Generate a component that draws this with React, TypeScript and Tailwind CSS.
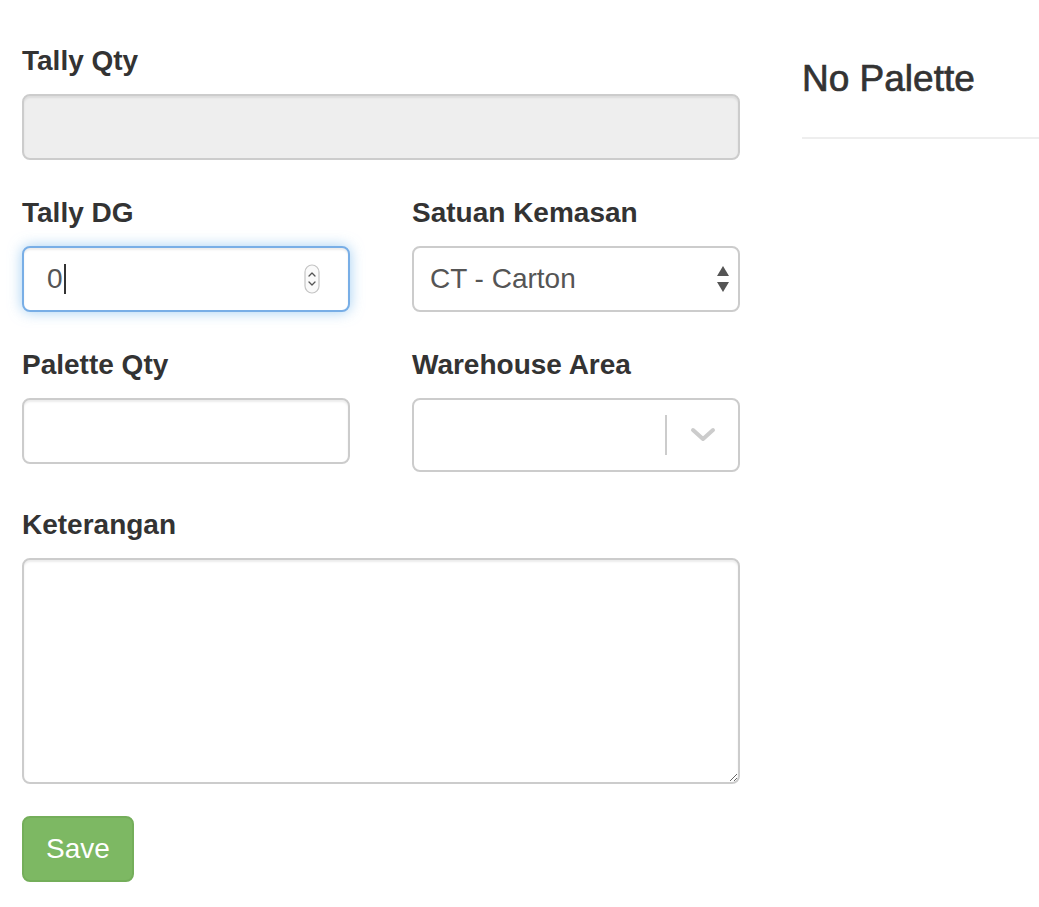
import React from "react";

const labelCls = "block text-[28px] leading-[37px] font-bold mb-[15px] text-[#333]";
const inputShape =
  "w-full h-[66px] rounded-[8px] border-2 border-[#cccccc] shadow-[inset_0_2px_2px_rgba(0,0,0,0.075)]";

export default function App() {
  return (
    <div className="flex min-h-[907px] w-[1039px] overflow-hidden bg-white pl-[22px] pt-[42px] font-['Liberation_Sans',Arial,sans-serif] text-[#333]">
      <div className="w-[718px] shrink-0">
        <div className="mb-[34px]">
          <label className={labelCls}>Tally Qty</label>
          <div className={`${inputShape} bg-[#eeeeee]`} />
        </div>

        <div className="grid grid-cols-2 gap-x-[62px]">
          <div className="mb-[34px]">
            <label className={labelCls}>Tally DG</label>
            <div className="relative flex h-[66px] w-full items-center rounded-[8px] border-2 border-[#78aee6] bg-white pl-[23px] shadow-[inset_0_2px_2px_rgba(0,0,0,0.075),0_0_14px_rgba(102,175,233,0.6)]">
              <span className="text-[28px] text-[#555]">0</span>
              <span className="ml-[1px] inline-block h-[30px] w-[2px] bg-[#333]" />
              <svg
                className="absolute right-[28px] top-1/2 -translate-y-1/2"
                width="16"
                height="30"
                viewBox="0 0 16 30"
              >
                <rect x="1" y="1" width="14" height="28" rx="7" fill="#fafafa" stroke="#c4c4c4" strokeWidth="1.2" />
                <path d="M5 12 L8 9 L11 12" fill="none" stroke="#555" strokeWidth="1.3" strokeLinecap="round" strokeLinejoin="round" />
                <path d="M5 18 L8 21 L11 18" fill="none" stroke="#555" strokeWidth="1.3" strokeLinecap="round" strokeLinejoin="round" />
              </svg>
            </div>
          </div>

          <div className="mb-[34px]">
            <label className={labelCls}>Satuan Kemasan</label>
            <div className="relative flex h-[66px] w-full items-center rounded-[8px] border-2 border-[#cccccc] bg-white pl-[16px]">
              <span className="text-[28px] text-[#555]">CT - Carton</span>
              <svg
                className="absolute right-[8px] top-1/2 -translate-y-1/2"
                width="14"
                height="28"
                viewBox="0 0 14 28"
              >
                <path d="M1 11 L7 1 L13 11 Z" fill="#555" />
                <path d="M1 17 L7 27 L13 17 Z" fill="#555" />
              </svg>
            </div>
          </div>

          <div className="mb-[34px]">
            <label className={labelCls}>Palette Qty</label>
            <div className={`${inputShape} bg-white`} />
          </div>

          <div className="mb-[34px]">
            <label className={labelCls}>Warehouse Area</label>
            <div className="flex h-[74px] w-full items-center rounded-[8px] border-2 border-[#cccccc] bg-white">
              <div className="flex-1" />
              <div className="h-[40px] w-[2px] bg-[#cccccc]" />
              <div className="flex w-[71px] items-center justify-center">
                <svg width="26" height="16" viewBox="0 0 26 16">
                  <path d="M3 3 L13 12 L23 3" fill="none" stroke="#cccccc" strokeWidth="4" strokeLinecap="round" strokeLinejoin="round" />
                </svg>
              </div>
            </div>
          </div>
        </div>

        <div className="mb-[32px]">
          <label className={labelCls}>Keterangan</label>
          <textarea className="block h-[226px] w-full rounded-[8px] border-2 border-[#cccccc] bg-white shadow-[inset_0_2px_2px_rgba(0,0,0,0.075)] outline-none" />
        </div>

        <button className="flex h-[66px] w-[112px] items-center justify-center rounded-[8px] border-2 border-[#74ae5a] bg-[#7db863] text-[28px] text-white">
          Save
        </button>
      </div>

      <div className="ml-[62px] flex-1">
        <h3 className="mt-[16px] text-[37px] leading-[41px] font-medium text-[#333] [-webkit-text-stroke:0.7px_#333]">
          No Palette
        </h3>
        <div className="mt-[38px] h-[2px] w-full bg-[#eeeeee]" />
      </div>
    </div>
  );
}
